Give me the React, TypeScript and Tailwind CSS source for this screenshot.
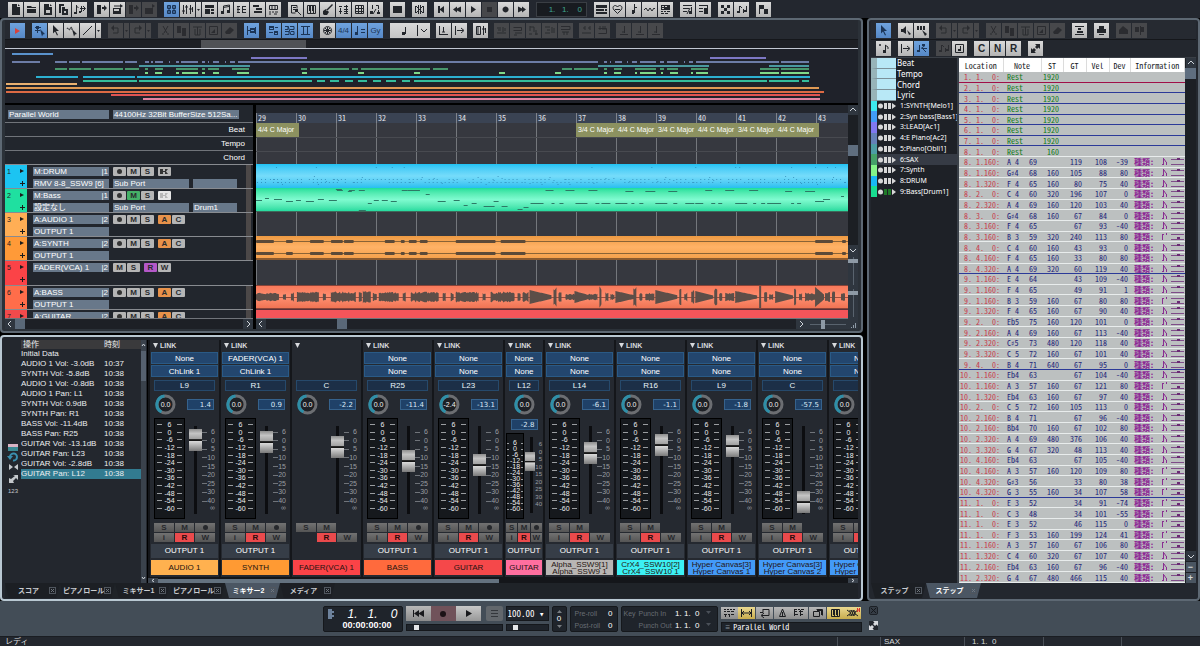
import React from 'react';
import clsx from 'clsx';

type Glyph = { f?: string; s?: string; t?: string };
type Tone = 'light' | 'blue' | 'off';
type Tool = [name: string, tone?: Tone];

// Toolbar glyphs on a 15x15 grid: f = filled, s = stroked, t = letters
const glyphs: Record<string, Glyph> = {
  'New': { f: 'M4 2h5v3h3v8H4zM10 2l2 2h-2z' },
  'Open': { f: 'M3 4h4l1 1h4v1H3zM3 7h9v4H3z' },
  'Save': { f: 'M4 2h5v3h3v8H4zM10 2l2 2h-2zM6 8v3h4V8z' },
  'Save as': { f: 'M3 2h5v2H5v7H3zM6 5h3v2h3v6H6zM8 9v2h2V9z' },
  'Export': { s: 'M4.500 3v7M4.500 4l2 2M9.500 4v6M8 6.500h5M11 4l2.500 2.500L11 9', f: 'M2 10h3v2H2zM7 9h2v2H7z' },
  'Import track': { f: 'M3 3h4v9H3zM8 5h2V3l3 3-3 3V7H8z' },
  'Import audio': { f: 'M3 6h8v6H3zM10 2l3 2-3 2zM4 7v2h5V7z', s: 'M4 4h6' },
  'Track in': { f: 'M3 3h4v9H3zM8 5h2V3l3 3-3 3V7H8z' },
  'Track out': { f: 'M3 6h8v6H3zM10 2l3 2-3 2z' },
  'Tracks': { s: 'M3.5 3.5h3v3h-3zM8.5 3.5h3v3h-3zM3.5 8.5h3v3h-3zM8.5 8.5h3v3h-3zM5 3v9M10 3v9' },
  'Mixer': { s: 'M3.5 3v9M6.5 3v9M10.5 3v9M2 9h3M5 5h3M9 7h3M12.5 5v5' },
  'Sections': { f: 'M3 3h9v3H3zM3 7h5v5H3zM9 7h3v2H9zM9 10h3v2H9z' },
  'Score': { s: 'M5.500 10V4l6-1v6M5 5.500l6-1', f: 'M3 9h3v3H3zM9 8h3v3H9z' },
  'Step': { s: 'M3 4.500h3M3 7.500h3M3 10.500h3M4 4v7M8 4.500h4M8 7.500h4M8 10.500h4M8.500 4v6' },
  'Lyrics': { f: 'M3 3h6v2H3zM6 6h6v2H6zM4 9h8v2H4z' },
  'Pads': { s: 'M3.5 3.500h8v4h-8zM6 3v5M9 3v5M3 10h2M6 10h2M9 10h3M3 12h2M8 12h3' },
  'Search': { s: 'M3.500 3v8h4M3 3.500h6v3M5 5.500h3M5 7.500h2M9 9l4 4', f: 'M7 7h3v3H7z' },
  'Piano': { s: 'M3.500 3.500h8v8h-8zM6.500 9v3M9.500 9v3', f: 'M5 3h2v6H5zM8 3h2v6H8z' },
  'Guitar': { f: 'M3 9l3-2 3 3-2 3H4l-1-1zM12 2l1 1-6 6-1-1z' },
  'Drums': { s: 'M3 4.500h3M8 4.500h4M4.500 6v6M8 7.500h4M8 9.500h4M8 11.500h4M3 9.500h3M10.500 3v9' },
  'Grid': { s: 'M3.500 3.500h8v8h-8zM3 6.500h9M3 9.500h9M6.500 3v9M9.500 3v9' },
  'Numbers': { s: 'M4.500 3v4M8 3.500h2.500V7M5 12l3-5M10.500 8v4', f: 'M2 9h3v3H2zM9 10h3v2H9z' },
  'Stop window': { f: 'M3 4h9v7H3z' },
  'Cross': { s: 'M3.500 4v7M11.500 4v7M4 4l7 7M11 4l-7 7M6.500 3v9M8.500 3v9' },
  'To start': { f: 'M4 4h2v3l4-3v7L6 8v3H4z' },
  'Rewind': { f: 'M3 7.500L7 4.500v2l4-2v6l-4-2v2z' },
  'Play': { f: 'M5 4l5 3.500L5 11z' },
  'Stop': { f: 'M5 5h5v5H5z' },
  'Record': { f: 'M7.500 4.500a3 3 0 1 0 .1 0z' },
  'Forward': { f: 'M12 7.500L8 4.500v2l-4-2v6l4-2v2z' },
  'Keys': { f: 'M2 3h11v3H2zM2 7h8v2H2zM2 10h11v2H2zM11 7h2v2h-2z' },
  'Loop': { s: 'M4 8c-3-4 2-6 3.500-3C9 2 14 4 11 8l-3.500 3.500L4 8M5 7.500h5' },
  'Tuning': { s: 'M8.500 2v8M8 5.500h3M6 11.500h2' , f: 'M6 8h3v3H6z' },
  'Wave': { s: 'M2 8l2-2 2 3 2-3 2 3 2-3 1 1' },
  'Chord pad': { f: 'M3 3h9v5H3zM4 4v1h2V4zM7 4v1h2V4zM4 6v1h2V6z', s: 'M3 9.500h2M6 9.500h2M9 9.500h3M3 11.500h3M7 11.500h3' },
  'Levels': { s: 'M3 3.500h9M3 6.500h6M3 9.500h4M10 6l-3 6M11.500 5v6', f: 'M9 9h3v3H9z' },
  'Bounce': { s: 'M3 3.500h9M3 6.500h4M3 9.500h4M11.500 4v8', f: 'M8 6h3v6H8z' },
  'Nodes': { f: 'M3 3h3v3H3zM9 3h3v3H9zM3 9h3v3H3zM9 9h3v3H9zM6 6h3v3H6z' },
  'Triplet': { s: 'M5.500 4v6M6 4l2 2M9.500 7v4M12.500 4v5', f: 'M3 9h3v2H3zM10 8h3v2h-3z' },
  'Flag': { f: 'M3 3h5v4H3zM8 7h4v5H8z', s: 'M3.500 3v9' },
  'Start': { f: 'M5 5l5 3-5 3z' },
  'Arrange tool': { s: 'M3 4.500h6M3 7.500h5M5.500 4v6', f: 'M8 6l5 5-2 .5-1 2zM4 3h3v3H4z' },
  'Pointer': { f: 'M5 2l6 6H8l2 4-1 .500-2-4-2 2z' },
  'Split tool': { s: 'M3 6c1-3 2 3 3 0s2-2 2 1', f: 'M8 6l5 5-2 .5-1 2z' },
  'Line': { s: 'M3 12l9-9' },
  'Undo': { s: 'M5 5h5v5H5', f: 'M3 5l3-3v6z' },
  'Redo': { s: 'M10 5H5v5h5', f: 'M12 5L9 2v6z' },
  'Cut': { s: 'M5 3l4 7M10 3L6 10M4 11h2M9 11h2' },
  'Copy': { f: 'M3 3h4v7H3zM8 5h4v8H8z' },
  'Paste': { s: 'M3 4h9M7.500 4v8M5 6v6h5V6' },
  'Image': { s: 'M3.500 3.500h8v8h-8z', f: 'M5 10l4-4v4z' },
  'Erase': { f: 'M3 9l5-5 4 3-4 4H4z' },
  'Snap': { s: 'M3.500 3v9M4 7.500h2M11.500 4v7', f: 'M6 5h5v5H6zM7 7v1h3V7z' },
  'Blocks': { f: 'M3 3h5v4H3zM8 8h4v4H8zM4 5v1h3V5zM9 10v1h2v-1z', s: 'M9 4.500h3M3 9.500h4' },
  'Blocks alt': { s: 'M3 3.500h3v3H3M8 3.500h4v3H8M3 8.500h4v3H3M9 8.500h3v3H9M6 3l3 9' },
  'Frame': { s: 'M3 3.500h9M3 11.500h9M5.500 3v9M9.500 3v9' },
  'Globe': { s: 'M7.500 3.500a4 4 0 1 0 .1 0M4 7.500h7M7.500 4v7M5 5l5 5M10 5l-5 5' },
  'Meter': { t: '4/4' },
  'Tempo': { s: 'M5.500 3v7M9 6.500h4M9 9.500h4', f: 'M3 9h3v3H3z' },
  'Key': { t: 'Gy' },
  'Bar one': { s: 'M3.500 3v9M3 11.500h9M7.500 4v5M6 9h3' },
  'Step right': { s: 'M3.500 3v9M5 7.500h6M9 5l3 2.500L9 10' },
  'Panel': { s: 'M3.500 3.500h4v8h-4zM10.500 3v9M9 6h3M12.500 5v5M5 4v7' },
  'Edit A': { s: 'M3 5h4M4 7h3M3 10h9M9 4v5M11 5v3' },
  'Edit B': { s: 'M3.500 4.500h8v3h-8M5 10h7M4 12h3' },
  'Edit C': { s: 'M4 3v5M4 4h4M8 4v5M3 11h3M9 11h3M10 7v5' },
  'Edit D': { s: 'M3 4h5M5 7h3M10 4v6M3 10h5M12 5v5' },
  'Edit E': { s: 'M3 3.500h9v3H3M4 9h7M6 9v3M9 9v3' },
  'Pair': { s: 'M4 5h2M9 5h2M3 10h9M6 3v4M11 3v4' },
  'Rack': { s: 'M3.500 5.500h8v5h-8M5 3v4M8 3v4M10 3v4' },
  'Down': { s: 'M8.500 3v7M4 11.500h8M6 9h3' },
  'Select notes': { f: 'M3 6h2l3-3v8L5 9H3zM9 7l4 4-2 1z' },
  'Select keys': { f: 'M3 3h2v4H3zM6 3h2v4H6zM9 3h2v4H9zM8 7l5 4-2 2z' },
  'Lanes': { s: 'M3 3.500h9M3 11.500h9', f: 'M6 5h3v2H6zM5 8h6v2H5z' },
  'Print': { f: 'M5 3h5v3H5zM3 6h9v4H3zM5 11h5v1H5z' },
  'Home': { f: 'M7 3l5 4v4H3V7z' },
  'Mirror': { f: 'M3 4h4v5H3zM9 4h3v5H9zM8 3h1v9H8z' },
  'Note': { s: 'M3 4h2M4 3v2M9.500 4v7M9 4l3 2v2', f: 'M7 9h3v3H7z' },
  'Link notes': { s: 'M5.500 4v6M7 7.500l4-3M8 7l4 4M9 7.500h4', f: 'M3 9h3v2H3zM8 3h3v2H8z' },
  'Boxed note': { s: 'M3.500 3.500h8v8h-8zM8.500 5v5', f: 'M6 8h3v2H6z' },
  'C': { t: 'C' },
  'N': { t: 'N' },
  'R': { t: 'R' },
  'Expand': { f: 'M7 3h5v5l-1.500-1.500-1.500 1.500-2-2L8.500 4.500zM3 7l1.500 1.500L6 7l2 2-1.500 1.500L8 12H3z' },
};

const mono = "font-['Noto_Sans_Mono_CJK_JP','Liberation_Sans_Narrow','Liberation_Mono','Noto_Sans_CJK_JP',monospace]";

const toneClass: Record<Tone, string> = {
  light: 'bg-linear-to-b from-[#dadada] to-[#b4b4b4] text-[#22252a]',
  blue: 'bg-linear-to-b from-[#6fa3de] to-[#5688c6] text-[#1b3557]',
  off: 'bg-[#47484b] text-[#2b2c30]',
};

const ToolButton: React.FC<{ tool: Tool }> = ({ tool: [name, tone = 'light'] }) => {
  if (name === 'v') {
    return (
      <button aria-label="More" className={clsx('flex h-[15px] w-[5px] items-center justify-center', toneClass[tone])}>
        <svg viewBox="0 0 5 5" className="w-[5px]"><path d="M1 2h3L2.500 4z" fill="currentColor" /></svg>
      </button>
    );
  }
  const g = glyphs[name];
  return (
    <button aria-label={name} className={clsx('h-[15px] w-[15px] shrink-0', toneClass[tone], name === 'Start' && 'text-[#d8423c]')}>
      {g.t ? (
        <span className={clsx('block text-center leading-[15px]', g.t.length > 1 ? 'text-[8px]' : 'text-[10px] font-bold')}>{g.t}</span>
      ) : (
        <svg viewBox="0 0 15 15" className="h-[15px] w-[15px]">
          {g.s && <path d={g.s} fill="none" stroke="currentColor" />}
          {g.f && <path d={g.f} fill="currentColor" fillRule="evenodd" />}
        </svg>
      )}
    </button>
  );
};

const Group: React.FC<{ tools: Tool[] }> = ({ tools }) => (
  <div className="flex gap-px">
    {tools.map((t, i) => <ToolButton key={i} tool={t} />)}
  </div>
);

const off = (...names: string[]): Tool[] => names.map((n) => [n, 'off']);
const on = (...names: string[]): Tool[] => names.map((n) => [n]);
const blue = (...names: string[]): Tool[] => names.map((n) => [n, 'blue']);

const TopBar = () => (
  <header className="flex h-[18px] shrink-0 items-center gap-[7px] overflow-hidden bg-[#23272f] pt-px pl-2">
    <Group tools={on('New', 'Open', 'Save', 'Save as', 'Export')} />
    <Group tools={[...on('Import track', 'Import audio'), ...off('Track in', 'Track out')]} />
    <Group tools={[['Tracks', 'blue'], ...on('Mixer', 'v', 'Sections', 'Score', 'Step', 'Lyrics', 'Pads')]} />
    <Group tools={on('Search', 'Piano', 'Guitar', 'Drums', 'Grid', 'Numbers')} />
    <Group tools={on('Stop window')} />
    <Group tools={on('Cross')} />
    <Group tools={[...on('To start', 'Rewind', 'Play'), ['Stop', 'off'], ...on('Record', 'Forward')]} />
    <div className="flex h-[15px] w-[51px] items-center justify-end border border-[#3a3e44] bg-[#181b20] pr-1 text-[8px] text-[#3fa592]">
      <span className="whitespace-pre">1.   1.    0</span>
    </div>
    <Group tools={on('Keys', 'Loop', 'Tuning', 'Wave', 'Chord pad')} />
    <Group tools={on('Levels', 'Bounce')} />
    <Group tools={on('Nodes', 'Triplet')} />
    <Group tools={on('Flag')} />
  </header>
);

const EditBar = () => (
  <div className="flex h-5 shrink-0 items-center gap-[7px] overflow-hidden border-b border-[#15171b] bg-[#262a31] pt-px pl-[5px]">
    <Group tools={blue('Start')} />
    <Group tools={[['Arrange tool', 'blue'], ...on('Pointer', 'Split tool', 'Line', 'v')]} />
    <Group tools={off('Undo', 'v', 'Redo', 'v')} />
    <Group tools={off('Cut', 'Copy', 'Paste', 'Image', 'Erase')} />
    <Group tools={blue('Snap')} />
    <Group tools={blue('Blocks', 'Blocks alt', 'Frame')} />
    <Group tools={[['Globe'], ...blue('Meter', 'Tempo', 'Key')]} />
    <div className="flex gap-1.5">
      <button aria-label="Note length" className="flex h-[15px] w-10 bg-linear-to-b from-[#dadada] to-[#c4c4c4] text-[#22252a]">
        <svg viewBox="0 0 40 15" className="h-[15px] w-10">
          <path d="M15.500 4v7M27.500 2v11M31 6l3 3 3-3" fill="none" stroke="currentColor" />
          <path d="M12 9h3v3h-3z" fill="currentColor" />
        </svg>
      </button>
      <Group tools={on('Bar one', 'Step right')} />
      <Group tools={on('Panel')} />
      <Group tools={off('Edit A', 'Edit B', 'Edit C', 'Edit D', 'Edit E')} />
      <Group tools={off('Pair', 'Rack')} />
      <Group tools={off('Down', 'Down', 'Down')} />
    </div>
  </div>
);

type Segs = [number, number][];
const overview: { y: number; color: string; segs: Segs }[] = [
  { y: 4, color: '#5a92cc', segs: [[12, 53]] },
  { y: 8, color: '#7d78c4', segs: [[251, 307], [710, 766]] },
  { y: 12, color: '#6c7ca6', segs: [[12, 40], [55, 67], [69, 80], [82, 123], [125, 137], [145, 149], [151, 153], [155, 163], [169, 170], [176, 179], [181, 198], [202, 205], [208, 209], [213, 219], [225, 226], [230, 235], [238, 598], [604, 607], [610, 611], [615, 622], [627, 628], [632, 637], [640, 656], [660, 664], [667, 678], [684, 685], [689, 693], [696, 779], [781, 809]] },
  { y: 16, color: '#4a98a0', segs: [[139, 250], [598, 709], [769, 809]] },
  { y: 19, color: '#48966c', segs: [[55, 67], [69, 91], [94, 123], [125, 139], [145, 148], [155, 163], [176, 198], [202, 205], [208, 219], [232, 249], [301, 307], [310, 349], [352, 358], [361, 430], [433, 448], [562, 572], [574, 598], [604, 607], [614, 622], [635, 656], [660, 664], [667, 678], [691, 708], [760, 779], [781, 809]] },
  { y: 23, color: '#80d888', segs: [[145, 148], [155, 162], [176, 179], [182, 198], [202, 205], [213, 219], [237, 249], [302, 307], [358, 364], [414, 420], [499, 505], [555, 561], [604, 607], [614, 621], [635, 637], [640, 656], [661, 663], [670, 678], [691, 693], [696, 708], [760, 779], [781, 809]] },
  { y: 27, color: '#2cb0d0', segs: [[36, 78], [83, 135], [137, 810]] },
  { y: 31, color: '#34bc9c', segs: [[83, 137], [139, 312], [317, 325], [330, 339], [345, 353], [358, 367], [373, 381], [386, 396], [402, 410], [414, 767], [769, 799], [802, 809]] },
  { y: 34, color: '#e8b070', segs: [[6, 77]] },
  { y: 38, color: '#e09a54', segs: [[6, 819]] },
  { y: 42, color: '#dc6a44', segs: [[6, 824]] },
  { y: 45, color: '#e05452', segs: [[111, 820]] },
  { y: 49, color: '#e484a0', segs: [[143, 820]] },
];

const Overview = () => (
  <div className="shrink-0 border-b-2 border-black bg-[#1f222a]">
    <div className="h-[9px] border-b border-[#c3c8d2] bg-[#1e2025] pl-[23%]">
      <div className="h-2 w-[16%] bg-[#505256]" />
    </div>
    <svg viewBox="5 0 853 54" preserveAspectRatio="none" className="block h-[54px] w-full">
      {overview.flatMap(({ y, color, segs }) =>
        segs.map(([a, b]) => <rect key={`${y}-${a}`} x={a} y={y} width={b - a} height={2} fill={color} />),
      )}
    </svg>
  </div>
);

const Field: React.FC<{ className?: string; children?: React.ReactNode }> = ({ className, children }) => (
  <div className={clsx('flex h-[9px] justify-between overflow-hidden bg-[#68788a] px-px text-[8px] leading-[9px] whitespace-nowrap text-white', className)}>
    {children}
  </div>
);

type Track = { name: string; ch: number; out?: string; keys: string[]; port?: string[]; num: string; hot?: string };
const tracks: Track[] = [
  { name: 'M:DRUM', ch: 1, out: 'RMV 8-8_SSW9 [6]', keys: ['●', 'M', 'S', '', 'K'], port: ['Sub Port', ''], num: 'bg-[#1cc4f2]' },
  { name: 'M:Bass', ch: 1, out: '設定なし', keys: ['●', 'M', 'S', '', 'K'], port: ['Sub Port', 'Drum1'], num: 'bg-[#1fe0a0]', hot: 'M' },
  { name: 'A:AUDIO 1', ch: 2, out: 'OUTPUT 1', keys: ['●', 'M', 'S', '', 'A', 'C'], num: 'bg-[#ffae55]', hot: 'A' },
  { name: 'A:SYNTH', ch: 2, out: 'OUTPUT 1', keys: ['●', 'M', 'S', '', 'A', 'C'], num: 'bg-[#ff9a38]', hot: 'A' },
  { name: 'FADER(VCA) 1', ch: 2, keys: ['M', 'S', '', 'R', 'W'], num: 'bg-[#fb4347]', hot: 'R' },
  { name: 'A:BASS', ch: 2, out: 'OUTPUT 1', keys: ['●', 'M', 'S', '', 'A', 'C'], num: 'bg-[#ff6d4a]', hot: 'A' },
  { name: 'A:GUITAR', ch: 2, keys: ['●', 'M', 'S', '', 'A', 'C'], num: 'bg-[#f24a4c]', hot: 'A' },
];

const hotClass: Record<string, string> = {
  M: 'bg-[#45b067]',
  A: 'bg-[#e8924a]',
  R: 'bg-[#b458c8]',
};

const TrackKeys: React.FC<{ track: Track }> = ({ track }) => (
  <div className="flex gap-px">
    {track.keys.map((k, i) =>
      k === '' ? <span key={i} className="w-0.5" /> : (
        <button
          key={i}
          className={clsx(
            'flex h-[9px] w-[13px] items-center justify-center rounded-[1px] text-[8px] leading-[9px] font-bold text-[#2a2b2e]',
            k === track.hot ? hotClass[k] : k === 'K' && track.hot ? 'bg-[#e6e6e6]' : 'bg-[#b5b5b5]',
          )}
          aria-label={k === '●' ? 'Record arm' : k === 'K' ? 'Keyboard' : k}
        >
          {k === '●' && <span className="h-[5px] w-[5px] rounded-full bg-[#333]" />}
          {k === 'K' && (
            <svg viewBox="0 0 9 5" className="w-[9px]"><path d="M0 0h3v2h2V0h3l-2 2.500L8 5H5V3H3v2H0z" fill={track.hot ? '#b8b8b8' : '#333'} /></svg>
          )}
          {k !== '●' && k !== 'K' && k}
        </button>
      ),
    )}
  </div>
);

const TrackList = () => (
  <div className="flex w-[248px] shrink-0 flex-col bg-[#22262d] text-white">
    <div className="flex h-[17px] shrink-0 items-center gap-1 pt-px pl-[3px]">
      <Field className="w-[101px]">Parallel World</Field>
      <Field className="w-[126px]">44100Hz 32Bit BufferSize 512Sa...</Field>
    </div>
    {['Beat', 'Tempo', 'Chord'].map((n) => (
      <div key={n} className="h-[14px] shrink-0 border-t border-[#70747a] pr-2 text-right text-[8px] leading-[14px]">{n}</div>
    ))}
    <div className="min-h-0 flex-1 overflow-hidden">
      {tracks.map((t, i) => (
        <div key={t.name} className={clsx('flex border-t border-[#888b90]', i === 4 ? 'h-[25px]' : 'h-6')}>
          <div className={clsx('flex w-[22px] justify-between px-0.5 py-px text-[7px] text-[#222]', t.num)}>
            <span className="leading-[11px]">{i + 1}</span>
            <svg viewBox="0 0 5 21" className="h-[21px] w-[5px]">
              <path d="M0 3l4 2-4 2zM2 15h1v2h2v1H3v2H2v-2H0v-1h2z" fill="#1c1c1c" />
            </svg>
          </div>
          <div className="ml-1.5 flex flex-1 flex-col gap-[3px] pt-0.5">
            <div className="flex gap-1">
              <Field className="w-[76px]"><span>{t.name}</span><span>|{t.ch}</span></Field>
              <TrackKeys track={t} />
            </div>
            <div className="flex gap-1">
              {t.out && <Field className="w-[76px]">{t.out}</Field>}
              {t.port && <Field className="w-[76px]">{t.port[0]}</Field>}
              {t.port && <Field className="w-11">{t.port[1]}</Field>}
            </div>
          </div>
          <div className={clsx('mr-0.5 w-[5px]', i !== 4 && 'bg-[#4c4848]')} />
        </div>
      ))}
    </div>
    <div className="flex h-[11px] shrink-0 items-center justify-between border-t border-[#70747a] bg-[#1d2026]">
      <div className="flex items-center">
        <Chevron dir="left" />
        <span className="h-[10px] w-[10px] bg-[#5a6878]" />
      </div>
      <Chevron dir="right" />
    </div>
  </div>
);

const chevrons = { left: 'M6 2L3 5l3 3', right: 'M4 2l3 3-3 3', up: 'M2 6l3-3 3 3', down: 'M2 4l3 3 3-3' };
const Chevron: React.FC<{ dir: keyof typeof chevrons }> = ({ dir }) => (
  <button aria-label={`Scroll ${dir}`} className="h-[10px] w-[10px] shrink-0 bg-[#2f363f]">
    <svg viewBox="0 0 10 10" className="h-[10px] w-[10px]"><path d={chevrons[dir]} fill="none" stroke="#cfd4da" /></svg>
  </button>
);

const beats: { bar: number; sig?: string }[] = Array.from({ length: 15 }, (_, i) => {
  const bar = 29 + i;
  if (bar === 29) return { bar, sig: '4/4 C Major' };
  if (bar >= 37 && bar < 43) return { bar, sig: bar % 2 ? '3/4 C Major' : '4/4 C Major' };
  return { bar };
});

const gridLines = 'bg-[repeating-linear-gradient(90deg,#74777c_0px,#74777c_1px,#36383f_1px,#36383f_40px)]';

const rnd = (n: number) => {
  const v = Math.sin(n * 127.1) * 43758.5453;
  return v - Math.floor(v);
};

const drumHits = Array.from({ length: 148 }, (_, i) => i).flatMap((i) => {
  const dots = [{ x: i * 4 + 1, y: 15 }, { x: i * 4 + 1, y: 18 }];
  if (rnd(i) > 0.5) dots.push({ x: i * 4 + 2, y: 12 + Math.floor(rnd(i + 9) * 9) });
  if (rnd(i + 50) > 0.85) dots.push({ x: i * 4, y: 3 });
  return dots.filter((_, k) => rnd(i * 3 + k) > 0.3);
});

const bassNotes: [number, number, number][] = [
  [0, 12, 6], [9, 10, 4], [18, 11, 8], [30, 13, 7], [40, 12, 5], [50, 13, 8], [62, 11, 6], [73, 12, 8], [80, 1, 6], [92, 3, 4], [103, 22, 7], [112, 15, 4],
  [118, 12, 5], [126, 12, 6], [135, 13, 6], [152, 2, 12], [170, 6, 4], [182, 13, 8], [198, 12, 6], [208, 17, 4], [216, 15, 5], [228, 18, 11], [238, 13, 5], [246, 18, 6],
  [262, 21, 5], [268, 19, 5], [275, 15, 13], [296, 15, 3], [304, 15, 4], [290, 2, 8], [310, 2, 9], [320, 15, 12], [340, 15, 4], [346, 15, 9], [333, 2, 9],
  [360, 15, 12], [376, 15, 3], [384, 15, 4], [370, 3, 8], [390, 3, 10], [400, 15, 12], [413, 3, 9], [418, 15, 4], [430, 15, 9], [440, 15, 8], [450, 2, 7], [456, 15, 4], [463, 15, 4], [470, 2, 9],
  [480, 15, 12], [494, 2, 9], [498, 15, 3], [506, 15, 4], [512, 15, 14], [530, 3, 7], [536, 15, 3], [542, 15, 4], [550, 3, 10], [560, 13, 9], [568, 11, 7], [586, 8, 3],
];

// Each burst of the bass take: start, width, half height, decays or not
const bursts: [number, number, number, boolean?][] = [
  [0, 23, 4], [27, 3, 3], [35, 3, 5], [41, 22, 5], [67, 3, 4], [75, 25, 5], [103, 3, 5], [107, 8, 6], [117, 4, 4], [123, 20, 5], [147, 3, 4], [155, 28, 5], [187, 3, 4], [195, 3, 4], [200, 23, 5], [227, 3, 4], [235, 24, 5], [262, 3, 4],
  [267, 6, 5], [274, 22, 7, true], [298, 3, 9], [303, 3, 5], [310, 9, 3], [319, 16, 6, true], [333, 9, 3], [344, 2, 10], [350, 3, 5], [355, 4, 3], [360, 20, 6, true], [378, 3, 9], [384, 3, 4], [390, 9, 4], [400, 22, 7, true], [424, 2, 8], [429, 3, 4], [436, 3, 7], [440, 18, 6, true], [459, 3, 9], [464, 3, 4], [470, 9, 4], [480, 22, 6, true], [504, 2, 11], [509, 3, 5], [514, 4, 3], [520, 18, 6, true], [539, 2, 10], [544, 3, 4], [550, 10, 4], [560, 9, 10, true], [570, 5, 5], [577, 3, 6], [586, 4, 4],
];
const wavePath = bursts.map(([x, w, h, decay]) => {
  const top = Array.from({ length: w + 1 }, (_, i) => {
    const fall = decay ? 1 - (i / w) * 0.75 : 1;
    return [x + i, Math.max(1, h * fall * (decay ? 1 : 0.65 + rnd(x + i) * 0.45))];
  });
  return `M${top.map(([a, b]) => `${a} ${11 - b}`).join('L')}L${top.reverse().map(([a, b]) => `${a} ${11 + b}`).join('L')}Z`;
}).join('');

const synthBursts: [number, number][] = [[0, 18], [30, 7], [54, 14], [75, 12], [88, 10], [129, 10], [145, 4], [153, 8], [164, 8], [200, 40], [245, 25], [560, 18], [587, 4]];

const Arrange = () => (
  <div className="flex min-w-0 flex-1 flex-col overflow-hidden bg-[#23262d]">
    <div className="h-2 shrink-0" />
    <div className="flex h-[10px] shrink-0 bg-[#3a4353]">
      {beats.map(({ bar }) => (
        <span key={bar} className={clsx('w-10 shrink-0 border-l border-[#80848c] pl-px text-[8px] leading-[10px] text-[#e4e6ea]', mono)}>{bar}</span>
      ))}
    </div>
    <div className={clsx('flex h-[14px] shrink-0 overflow-hidden', gridLines)}>
      {beats.map(({ bar, sig }) => (
        <span
          key={bar}
          className={clsx('shrink-0 pl-0.5 text-[7px] leading-[14px] whitespace-nowrap text-white', sig && 'bg-[#8c9160]', bar === 29 || bar === 42 ? '-mr-[3px] w-[43px]' : 'w-10')}
        >
          {sig}
        </span>
      ))}
    </div>
    <div className={clsx('h-[14px] shrink-0 border-t border-[#484a50]', gridLines)} />
    <div className={clsx('h-[13px] shrink-0 border-t border-[#484a50]', gridLines)} />
    <div className="min-h-0 flex-1 overflow-hidden">
      <div className="h-6 bg-linear-to-b from-[#1dc3f4] via-[#76dcfa] to-[#24bff0]">
        <svg viewBox="0 0 593 24" preserveAspectRatio="none" className="h-6 w-full">
          {drumHits.map((d, i) => <rect key={i} x={d.x} y={d.y} width={1} height={1} fill="#2a7fae" opacity={0.7} />)}
        </svg>
      </div>
      <div className="h-6 border-b border-[#3e6a5a] bg-linear-to-b from-[#1adf9b] via-[#7ffbd0] to-[#22dca0]">
        <svg viewBox="0 0 593 24" preserveAspectRatio="none" className="h-6 w-full">
          {bassNotes.map(([x, y, w], i) => <rect key={i} x={x} y={y} width={w} height={1} fill="#2d7a66" />)}
          {[81, 93, 103, 146, 158].map((x) => <rect key={x} x={x} y={2} width={6} height={1} fill="#2d7a66" />)}
        </svg>
      </div>
      <div className={clsx('h-6', gridLines)} />
      <div className="h-6 border-b-2 border-[#8a5a30] bg-linear-to-b from-[#ee9a42] via-[#ffb266] to-[#f6a14c]">
        <svg viewBox="0 0 593 22" preserveAspectRatio="none" className="h-[22px] w-full">
          <path d="M0 5.500h593M0 17.500h593" stroke="#8a6236" />
          {synthBursts.map(([x, w]) => [4, 16].map((y) => <rect key={`${x}-${y}`} x={x} y={y} width={w} height={3} rx={1} fill="#5c4a38" />))}
        </svg>
      </div>
      <div className={clsx('h-[25px]', gridLines)} />
      <div className="h-6 border-y border-[#8a4438] bg-linear-to-b from-[#f8795a] via-[#ff8f70] to-[#f07454]">
        <svg viewBox="0 0 593 22" preserveAspectRatio="none" className="h-[22px] w-full">
          <path d="M0 11.500h593" stroke="#a04c3c" />
          <path d={wavePath} fill="#5c4e48" />
        </svg>
      </div>
      <div className="h-6 border-t border-[#5c3038] bg-[#f4555a]" />
    </div>
    <div className="flex h-[11px] shrink-0 items-center border-t border-[#70747a] bg-[#1f2228]">
      <Chevron dir="left" />
      <div className="flex-1 pl-[12%]"><span className="block h-[10px] w-[10px] bg-[#5a6878]" /></div>
      <Chevron dir="right" />
      <svg viewBox="0 0 42 10" className="h-[10px] w-[42px] bg-[#2f363f]">
        <path d="M4 5.500h36" stroke="#59636e" />
        <path d="M15 1h4v9h-4z" fill="#8e9aa6" />
      </svg>
    </div>
  </div>
);

const ArrangeScroll = () => (
  <div className="flex w-[10px] shrink-0 flex-col bg-[#1c1f24]">
    <Chevron dir="up" />
    <div className="flex-1 pt-[30px]"><span className="block h-[11px] bg-[#5f6e7f]" /></div>
    <Chevron dir="down" />
    <svg viewBox="0 0 10 74" className="h-[74px] w-[10px] bg-[#2f363f]">
      <path d="M5.500 2v28M5.500 34v28" stroke="#59636e" />
      <path d="M0 4h10v4H0zM0 36h10v4H0z" fill="#8e9aa6" />
      <path d="M3 72h1v1H3zM5 70h1v3H5zM7 68h1v5H7z" fill="#8e9aa6" />
    </svg>
  </div>
);

const history: [string, string][] = [
  ['Initial Data', ''],
  ['AUDIO 1 Vol: -3.0dB', '10:37'],
  ['SYNTH Vol: -5.8dB', '10:38'],
  ['AUDIO 1 Vol: -0.8dB', '10:38'],
  ['AUDIO 1 Pan: L1', '10:38'],
  ['SYNTH Vol: 0.9dB', '10:38'],
  ['SYNTH Pan: R1', '10:38'],
  ['BASS Vol: -11.4dB', '10:38'],
  ['BASS Pan: R25', '10:38'],
  ['GUITAR Vol: -13.1dB', '10:38'],
  ['GUITAR Pan: L23', '10:38'],
  ['GUITAR Vol: -2.8dB', '10:38'],
  ['GUITAR Pan: L12', '10:38'],
];

const History = () => (
  <div className="flex shrink-0 bg-[#23272e]">
    <svg viewBox="0 0 16 60" className="mt-24 h-[60px] w-4">
      <path d="M3 8h10v3H3z" fill="#d9b3c4" />
      <path d="M3 11h10v4H3z" fill="#3c8a94" />
      <path d="M5 20.500a3.500 3.500 0 1 1 3 4" fill="none" stroke="#3a8fae" strokeWidth="2" />
      <path d="M2 20h6l-3 4z" fill="#3a8fae" />
      <path d="M4 28l4 3-4 3zM13 28l-4 3 4 3z" fill="#c4c8cc" />
      <path d="M8 39h5v5l-2-2-3 3 1 2H4v-5l2 1 4-3z" fill="#c4c8cc" />
      <text x="3" y="57" fill="#c4c8cc" fontSize="6">123</text>
    </svg>
    <table className="w-[120px] table-fixed self-start text-left text-[8px] leading-[10px] whitespace-nowrap text-[#eceef0]">
      <thead>
        <tr className="h-[9px] bg-[#3a3a3c]">
          <th className="w-[83px] pl-0.5 leading-[9px] font-normal">操作</th>
          <th className="leading-[9px] font-normal">時刻</th>
        </tr>
      </thead>
      <tbody>
        {history.map(([op, time], i) => (
          <tr key={i} className={clsx('h-[10px]', i === 12 && 'bg-[#327b90]')}>
            <td>{op}</td>
            <td>{time}</td>
          </tr>
        ))}
      </tbody>
    </table>
    <div className="mr-px flex w-[5px] flex-col items-center bg-[#3a424c] py-[3px]">
      <svg viewBox="0 0 5 4" className="w-[5px]"><path d="M1 3l1.500-2L4 3" fill="none" stroke="#cfd4da" /></svg>
      <div className="mt-1 h-[30px] w-full bg-[#56616f]" />
      <svg viewBox="0 0 5 4" className="mt-auto w-[5px]"><path d="M1 1l1.500 2L4 1" fill="none" stroke="#cfd4da" /></svg>
    </div>
  </div>
);

type Strip = { link?: string[]; pan: string; knob?: string; vol: string; pos: number; label: string[]; color: string; narrow?: boolean; rec?: boolean; vca?: boolean };
const strips: Strip[] = [
  { link: ['None', 'ChLink 1'], pan: 'L9', vol: '1.4', pos: 95, label: ['AUDIO 1'], color: 'bg-[#ffb14f]', rec: true },
  { link: ['FADER(VCA) 1', 'ChLink 1'], pan: 'R1', vol: '0.9', pos: 92, label: ['SYNTH'], color: 'bg-[#ff9a33]', rec: true },
  { pan: 'C', vol: '-2.2', pos: 85, label: ['FADER(VCA) 1'], color: 'bg-[#fb4347]', vca: true },
  { link: ['None', 'None'], pan: 'R25', vol: '-11.4', pos: 63, label: ['BASS'], color: 'bg-[#ff6a3d]', rec: true },
  { link: ['None', 'None'], pan: 'L23', knob: '-2.4', vol: '-13.1', pos: 58, label: ['GUITAR'], color: 'bg-[#f5484a]', rec: true },
  { link: ['None', 'None'], pan: 'L12', vol: '-2.8', pos: 74, label: ['GUITAR'], color: 'bg-[#ff6f9f]', narrow: true, rec: true },
  { link: ['None', 'None'], pan: 'L14', vol: '-6.1', pos: 76, label: ['Alpha_SSW9[1]', 'Alpha_SSW9 1'], color: 'bg-[#b9b6b4]' },
  { link: ['None', 'None'], pan: 'R16', vol: '-1.1', pos: 88, label: ['CrX4_SSW10[2]', 'CrX4_SSW10 1'], color: 'bg-[#3cf0f4]' },
  { link: ['None', 'None'], pan: 'L9', vol: '-1.8', pos: 87, label: ['Hyper Canvas[3]', 'Hyper Canvas 1'], color: 'bg-[#439af8]' },
  { link: ['None', 'None'], pan: 'C', vol: '-57.5', pos: 1, label: ['Hyper Canvas[3]', 'Hyper Canvas 2'], color: 'bg-[#439af8]' },
  { link: ['None', 'None'], pan: 'C', vol: '-57.5', pos: 1, label: ['Hyper Canvas[3]', 'Hyper Canvas 3'], color: 'bg-[#439af8]' },
];

const meterMarks = ['6', '0', '-6', '-12', '-18', '-24', '-30', '-36', '-42', '-48', '-54', '-60'];
const faderMarks = ['6', '0', '5', '10', '15', '20', '25', '30', '40'];

const Knob: React.FC<{ value: string }> = ({ value }) => (
  <svg viewBox="0 0 21 21" className="h-[21px] w-[21px]">
    <circle cx="10.500" cy="10.500" r="8.500" fill="#1d2025" stroke="#6c6e72" strokeWidth="3" />
    <path d="M6.500 18A8.500 8.500 0 0 1 9.500 2" fill="none" stroke="#2e8fa8" strokeWidth="3" />
    <text x="10.500" y="13" textAnchor="middle" fontSize="7" fill="#f2f2f2">{value}</text>
  </svg>
);

const VolBox: React.FC<{ value: string }> = ({ value }) => (
  <span className="block h-[11px] w-[27px] border border-[#36628c] bg-[#1f4168] pr-0.5 text-right font-['DejaVu_Sans',sans-serif] text-[7px] leading-[10px] text-[#dceaf6]">{value}</span>
);

const StripButton: React.FC<{ name: string }> = ({ name }) => (
  <button
    aria-label={name === '●' ? 'Record' : name}
    className={clsx(
      'flex h-[9px] flex-1 items-center justify-center text-[8px] leading-[9px] font-bold',
      name === 'R' ? 'bg-[#ea4a4c] text-[#280c0c]' : 'bg-linear-to-b from-[#727272] to-[#555] text-[#26282c]',
    )}
  >
    {name === '●' ? <span className="h-[5px] w-[5px] rounded-full bg-[#26282c]" /> : name}
  </button>
);

const ChannelStrip: React.FC<{ strip: Strip }> = ({ strip: s }) => (
  <div className={clsx('flex shrink-0 flex-col border-l-2 border-[#14161a] px-px pb-0.5', s.narrow ? 'w-10' : 'w-1/10')}>
    <div className="flex h-[11px] items-center gap-0.5 pl-0.5 text-[7px] font-bold text-[#d8dadd]">
      <svg viewBox="0 0 5 5" className="w-[5px]"><path d="M0 0h5L2.500 5z" fill="#d8dadd" /></svg>
      {s.link && 'LINK'}
    </div>
    <div className="mt-px flex h-[25px] flex-col gap-px">
      {s.link?.map((l, i) => (
        <span key={i} className="h-3 overflow-hidden border border-[#2a5a86] bg-[#23466e] text-center text-[8px] leading-[11px] whitespace-nowrap text-white">{l}</span>
      ))}
    </div>
    <span className="mx-[3px] mt-[3px] h-[11px] border border-[#26496b] bg-[#1c2f47] text-center text-[8px] leading-[10px] text-[#e8f4fa]">{s.pan}</span>
    <div className={clsx('mt-[3px] flex h-[21px] items-center px-1', s.narrow ? 'justify-center' : 'justify-between')}>
      <Knob value={s.knob ?? '0.0'} />
      {!s.narrow && <VolBox value={s.vol} />}
    </div>
    {s.narrow && <div className="mt-1 flex justify-center"><VolBox value={s.vol} /></div>}
    <div className={clsx('mt-[3px] flex', s.narrow ? 'h-[86px]' : 'h-[101px] px-[3px]')}>
      <div
        className={clsx(
          'flex shrink-0 flex-col items-center justify-between text-[7px]',
          !s.vca && 'border border-black bg-[#16191d]',
          s.narrow ? 'w-[18px] py-1.5 leading-[6px]' : 'w-[31px] pt-0.5 pb-1.5 leading-[7px]',
        )}
      >
        {!s.vca && meterMarks.map((m) => (
          <div key={m} className="flex w-full items-center justify-between text-[#eceef0]">
            <span className={clsx('h-px bg-[#9a9da0]', s.narrow ? 'w-0.5' : 'ml-0.5 w-[5px]')} />
            {m}
            <span className={clsx('h-px bg-[#9a9da0]', s.narrow ? 'w-0.5' : 'mr-0.5 w-[5px]')} />
          </div>
        ))}
      </div>
      <input
        type="range"
        aria-label={`${s.label[0]} volume`}
        defaultValue={s.pos}
        className={clsx(
          'm-0 shrink-0 appearance-none bg-transparent [direction:rtl] [writing-mode:vertical-lr]',
          'bg-[linear-gradient(90deg,transparent_5px,#0c0d10_5px,#0c0d10_8px,transparent_8px)]',
          '[&::-webkit-slider-thumb]:appearance-none [&::-webkit-slider-thumb]:bg-[linear-gradient(180deg,#8e8e8e_0%,#c4c4c4_20%,#a0a0a0_46%,#151515_48%,#151515_54%,#d8d8d8_56%,#7a7a7a_100%)]',
          s.narrow
            ? 'mt-1 ml-px h-[76px] w-[10px] [&::-webkit-slider-thumb]:h-[19px] [&::-webkit-slider-thumb]:w-[10px]'
            : 'mt-2 ml-1 h-[88px] w-[13px] [&::-webkit-slider-thumb]:h-[22px] [&::-webkit-slider-thumb]:w-[13px]',
        )}
      />
      <div className={clsx('flex flex-1 flex-col text-right text-[#9a9da2]', s.narrow ? 'mt-2 text-[6px] leading-[6px]' : 'mt-[10px] text-[7px] leading-[8px]')}>
        <div className={clsx('flex flex-col justify-between', s.narrow ? 'h-[66px]' : 'h-[77px]')}>
          {faderMarks.map((m) => (
            <div key={m} className="flex items-center justify-between">
              <span className={clsx('h-px bg-[#70747a]', s.narrow ? 'w-0' : 'w-[5px]')} />
              {m}
            </div>
          ))}
        </div>
        {!s.narrow && <span className="leading-[5px]">∞</span>}
      </div>
    </div>
    <div className={clsx('mt-1 flex flex-col gap-px', !s.narrow && 'mx-[3px]')}>
      <div className="flex gap-px">
        <StripButton name="S" />
        <StripButton name="M" />
        {s.rec ? <StripButton name="●" /> : <span className="flex-1" />}
      </div>
      <div className="flex gap-px">
        {s.vca ? <span className="flex-1" /> : <StripButton name="i" />}
        <StripButton name="R" />
        <StripButton name="W" />
      </div>
    </div>
    <span className={clsx('mt-0.5 h-[14px] overflow-hidden text-center text-[8px] leading-[14px] whitespace-nowrap text-white', !s.vca && 'bg-[#363d47]')}>
      {s.vca ? '' : s.narrow ? 'OUTPUT' : 'OUTPUT 1'}
    </span>
    <div className={clsx('mt-0.5 flex h-[15px] flex-col justify-center overflow-hidden text-center text-[8px] leading-[7px] whitespace-nowrap text-[#241410]', s.color)}>
      {s.label.map((l) => <span key={l}>{l}</span>)}
    </div>
  </div>
);

const Tab: React.FC<{ label: string; active?: boolean }> = ({ label, active }) => (
  <div
    className={clsx(
      'flex h-[15px] w-[55px] items-center pr-1 pl-[3px] text-[7px] font-bold whitespace-nowrap [clip-path:polygon(0_0,100%_0,calc(100%-4px)_100%,4px_100%)]',
      active ? 'bg-[#4b5663] text-white' : 'bg-[#1c1f24] text-[#c9ccd0]',
    )}
  >
    <button className="flex-1 text-center">{label}</button>
    <button aria-label={`Close ${label}`} className="flex h-[7px] w-[7px] shrink-0 border border-[#50565e]">
      <svg viewBox="0 0 5 5" className="h-[5px] w-[5px]"><path d="M1 1l3 3M4 1L1 4" stroke="#70767e" /></svg>
    </button>
  </div>
);

const MixerPanel = () => (
  <section className="shrink-0 rounded-[4px] border-2 border-[#b9c8d2] bg-[#23272e] px-[3px] pt-[3px] pb-px">
    <div className="flex">
      <History />
      <div className="flex min-w-0 flex-1 flex-col border-l border-black bg-[#252930]">
        <div className="flex overflow-hidden">
          {strips.map((s, i) => <ChannelStrip key={i} strip={s} />)}
        </div>
        <div className="flex h-1.5 items-center border-t border-[#14161a] bg-[#14161a]">
          <svg viewBox="0 0 10 5" className="h-[5px] w-[10px] bg-[#3a424c]"><path d="M6 1L4 2.500 6 4" fill="none" stroke="#cfd4da" /></svg>
          <div className="h-1 w-[48%] bg-[#64727f]" />
          <svg viewBox="0 0 10 5" className="ml-auto h-[5px] w-[10px] bg-[#3a424c]"><path d="M4 1l2 1.500L4 4" fill="none" stroke="#cfd4da" /></svg>
        </div>
      </div>
    </div>
    <nav className="flex bg-[#1f2328]">
      {['スコア', 'ピアノロール', 'ミキサー1', 'ピアノロール', 'ミキサー2', 'メディア'].map((t, i) => (
        <Tab key={i} label={t} active={i === 4} />
      ))}
    </nav>
  </section>
);

const sideTracks: [string, string][] = [
  ['1:SYNTH[Melo1]', 'bg-[#3de8ee]'],
  ['2:Syn bass[Bass1]', 'bg-[#409cf6]'],
  ['3:LEAD[Ac1]', 'bg-[#8078f0]'],
  ['4:E Piano[Ac2]', 'bg-[#6480b8]'],
  ['5:Piano[Obli1]', 'bg-[#4c9ca4]'],
  ['6:SAX', 'bg-[#44a068]'],
  ['7:Synth', 'bg-[#84f488]'],
  ['8:DRUM', 'bg-[#18b8f4]'],
  ['9:Bass[Drum1]', 'bg-[#18dc90]'],
];

const SideTracks = () => (
  <div className="w-[86px] shrink-0 overflow-hidden bg-[#1e2127]">
    <div className="flex h-[139px] flex-col font-['Noto_Sans',sans-serif] text-[7px] leading-[10px] whitespace-nowrap text-white">
      {['Beat', 'Tempo', 'Chord', 'Lyric'].map((n) => (
        <div key={n} className="flex min-h-0 flex-1 items-center text-[8px]">
          <span className="mr-px h-full w-[25px] border-b border-l-[6px] border-b-[#7c9098] border-l-[#98b4b8] bg-[#b8e8f6]" />
          {n}
        </div>
      ))}
      {sideTracks.map(([n, color], i) => (
        <div key={n} className={clsx('flex min-h-0 flex-1 items-center', i === 5 && 'bg-[#363b45]')}>
          <span className={clsx('h-full w-1.5 shrink-0', color)} />
          <svg viewBox="0 0 22 8" className="ml-px h-2 w-[22px] shrink-0">
            <circle cx="2.500" cy="4" r="2.500" fill="#d8d8d8" />
            <path d="M6 1h3v6H6zM10 1h3v6h-3z" fill={i === 8 ? '#1f7a28' : '#d8d8d8'} />
            <path d="M14 1l4 3-4 3z" fill="#d8d8d8" />
          </svg>
          {n}
        </div>
      ))}
    </div>
  </div>
);

type Ev = [loc: string, note: string, num: string, st: string, gt: string, vel: string, dev: string];
const events: Ev[] = [
  ['8. 1.160:', 'A 4', '69', '', '119', '108', '-39'],
  ['8. 1.160:', 'G♯4', '68', '160', '105', '88', '80'],
  ['8. 1.320:', 'F 4', '65', '160', '80', '75', '40'],
  ['8. 2.  0:', 'C 4', '60', '320', '196', '107', '0'],
  ['8. 2.320:', 'A 4', '69', '160', '120', '103', '40'],
  ['8. 3.  0:', 'G♯4', '68', '160', '67', '84', '0'],
  ['8. 3.160:', 'F 4', '65', '', '67', '93', '-40'],
  ['8. 3.160:', 'B 3', '59', '320', '240', '113', '80'],
  ['8. 4.  0:', 'C 4', '60', '160', '43', '93', '0'],
  ['8. 4.160:', 'F 4', '65', '160', '33', '80', '80'],
  ['8. 4.320:', 'A 4', '69', '320', '60', '119', '40'],
  ['9. 1.160:', 'E 4', '64', '', '43', '109', '-40'],
  ['9. 1.160:', 'F 4', '65', '', '49', '91', '1'],
  ['9. 1.160:', 'B 3', '59', '160', '67', '80', '80'],
  ['9. 1.320:', 'F 4', '65', '160', '67', '90', '40'],
  ['9. 2.  0:', 'Eb5', '75', '160', '120', '101', '0'],
  ['9. 2.160:', 'A 4', '69', '160', '67', '113', '-40'],
  ['9. 2.320:', 'C♯5', '73', '480', '120', '118', '40'],
  ['9. 3.320:', 'C 5', '72', '160', '67', '101', '40'],
  ['9. 4.  0:', 'B 4', '71', '640', '67', '95', '0'],
  ['10. 1.160:', 'Eb4', '63', '', '67', '104', '-40'],
  ['10. 1.160:', 'A 3', '57', '160', '67', '121', '80'],
  ['10. 1.320:', 'Eb4', '63', '160', '67', '97', '40'],
  ['10. 2.  0:', 'C 5', '72', '160', '105', '113', '0'],
  ['10. 2.160:', 'B 4', '71', '', '67', '96', '-40'],
  ['10. 2.160:', 'Bb4', '70', '160', '67', '102', '80'],
  ['10. 2.320:', 'A 4', '69', '480', '376', '106', '40'],
  ['10. 3.320:', 'G 4', '67', '320', '48', '113', '40'],
  ['10. 4.160:', 'Eb4', '63', '', '67', '105', '-40'],
  ['10. 4.160:', 'A 3', '57', '160', '120', '109', '80'],
  ['10. 4.320:', 'G♯3', '56', '', '33', '80', '38'],
  ['10. 4.320:', 'G 3', '55', '160', '34', '107', '58'],
  ['11. 1.  0:', 'E 3', '52', '', '34', '91', '-74'],
  ['11. 1.  0:', 'C 3', '48', '', '34', '101', '-55'],
  ['11. 1.  0:', 'E 3', '52', '', '46', '115', '0'],
  ['11. 1.  0:', 'F 3', '53', '160', '199', '124', '41'],
  ['11. 1.160:', 'A 3', '57', '160', '67', '106', '80'],
  ['11. 1.320:', 'C 4', '60', '320', '67', '107', '40'],
  ['11. 2.160:', 'Eb4', '63', '160', '67', '96', '-40'],
  ['11. 2.320:', 'G 4', '67', '480', '466', '115', '40'],
];

const NoteMark: React.FC<{ low: boolean }> = ({ low }) => (
  <svg viewBox="0 0 24 9" className="h-[9px] w-6 shrink-0">
    <path d={low ? 'M1.500 2v6M1 2.500h2M5.500 1v2' : 'M2.500 1v6M3 2l2 3M5.500 5v3M1 7.500h2'} fill="none" stroke="#8a2f92" />
    <path d="M10 2.500h13M10 7.500h13" stroke="#7e4c88" />
    <path d={low ? 'M16 5h3v2h-3z' : 'M16 1h3v2h-3z'} fill="#6a2a74" />
  </svg>
);

const NoteName: React.FC<{ note: string }> = ({ note }) =>
  note[1] === '♯' ? (
    <span>{note[0]}<span className="font-['DejaVu_Sans',sans-serif] text-[7px]">♯</span>{note[2]}</span>
  ) : (
    <span>{note}</span>
  );

const bar = (loc: string) => loc.split('.')[0];

const EventTable = () => (
  <table className={clsx('h-full min-w-0 flex-1 table-fixed bg-[#bcc0c0] text-[8px] leading-[9px] whitespace-pre', mono)}>
    <colgroup>
      <col className="w-11" /><col className="w-[38px]" /><col className="w-[22px]" /><col className="w-[23px]" />
      <col className="w-[23px]" /><col className="w-[21px]" /><col />
    </colgroup>
    <thead>
      <tr className="h-[14px] bg-white text-[#16181c]">
        {['Location', 'Note', 'ST', 'GT', 'Vel', 'Dev', 'Information'].map((h) => (
          <th key={h} className="border-r border-[#dcdcdc] text-center font-normal">{h}</th>
        ))}
      </tr>
    </thead>
    <tbody className="text-right text-[#1e1e78]">
      {Array.from({ length: 8 }, (_, i) => (
        <tr key={i} className={clsx('border-b', i === 0 ? 'border-[#a01048]' : i === 7 ? 'border-[#e8ecec]' : 'border-[#2c3a98]')}>
          <td className="pr-[3px] text-[#c83a4c]">{i + 1}. 1.  0:</td>
          <td className="pl-1 text-left text-[#127a1c]">Rest</td>
          <td className="pr-1 text-[#127a1c]"><span className="float-right">{i === 7 ? '160' : '1920'}</span></td>
          <td colSpan={4} />
        </tr>
      ))}
      {events.map(([loc, note, num, st, gt, vel, dev], i) => {
        const last = events[i + 1] && bar(events[i + 1][0]) !== bar(loc);
        return (
          <tr key={i} className={clsx('border-b', last ? 'border-[#2c3a98]' : 'border-[#e8ecec]')}>
            <td className="pr-[3px] text-[#c83a4c]">{loc}</td>
            <td className="pr-1 pl-1">
              <div className="flex h-[9px] justify-between"><NoteName note={note} /><span>{num}</span></div>
            </td>
            <td className="pr-1">{st}</td>
            <td className="pr-1">{gt}</td>
            <td className="pr-0.5">{vel}</td>
            <td className="pr-0.5">{dev}</td>
            <td className="pl-1">
              <div className="flex h-[9px] items-center justify-between font-bold text-[#8c2494]"><span>種類:</span><NoteMark low={+num < 60} /></div>
            </td>
          </tr>
        );
      })}
    </tbody>
  </table>
);

const StepPanel = () => (
  <aside className="flex w-[333px] shrink-0 flex-col rounded-[4px] border-2 border-[#5d6873] bg-[#23272e] px-0.5 pb-px">
    <div className="flex h-5 shrink-0 items-center gap-[7px] border-b border-[#15171b] bg-[#262a31] pt-px pl-[5px]">
      <Group tools={blue('Pointer')} />
      <Group tools={on('Select notes', 'Select keys')} />
      <Group tools={off('Undo', 'v', 'Redo', 'v')} />
      <Group tools={off('Cut', 'Copy', 'Paste', 'Image', 'Erase')} />
      <Group tools={on('Lanes')} />
      <Group tools={on('Print')} />
      <Group tools={off('Home', 'Mirror')} />
    </div>
    <div className="flex h-[18px] shrink-0 items-center gap-[7px] border-b border-[#3a3f46] pl-[5px]">
      <Group tools={on('Note')} />
      <Group tools={[['Step right'], ['Link notes', 'blue']]} />
      <Group tools={[['Triplet', 'off'], ['Boxed note']]} />
      <Group tools={on('C', 'N', 'R')} />
      <Group tools={on('Expand')} />
    </div>
    <div className="flex min-h-0 flex-1">
      <SideTracks />
      <div className="w-0.5 shrink-0 bg-[#3a4048]" />
      <EventTable />
      <div className="flex w-[11px] shrink-0 flex-col items-center bg-[#1c1f24]">
        <Chevron dir="up" />
        <span className="h-[11px] w-full bg-[#5f6e7f]" />
        <div className="flex-1" />
        <Chevron dir="down" />
        {['−', '+'].map((z) => (
          <button key={z} className="mt-px h-[10px] w-[10px] bg-[#4a5561] text-[9px] leading-[10px] font-bold text-[#d4d8dc]">{z}</button>
        ))}
      </div>
    </div>
    <nav className="flex shrink-0">
      <Tab label="ステップ" />
      <Tab label="ステップ" active />
    </nav>
  </aside>
);

const lcd = 'border border-[#15181c] bg-[#1f242b]';

const MiniSlider: React.FC<{ label: string; value: number; className: string }> = ({ label, value, className }) => (
  <input
    type="range"
    aria-label={label}
    defaultValue={value}
    className={clsx('m-0 h-[7px] appearance-none px-1', lcd, className, '[&::-webkit-slider-thumb]:h-[5px] [&::-webkit-slider-thumb]:w-[5px] [&::-webkit-slider-thumb]:appearance-none [&::-webkit-slider-thumb]:bg-[#e4e6e8]')}
  />
);

const modeKeys: { name: string; d: string; lit?: boolean }[] = [
  { name: 'Auto step', d: 'M3 2.500h2M6 2.500h2M9 2.500h2M12 2.500h2M3 4.500h2M6 4.500h3M10 4.500h3M3 7.500h3M7 7.500h2M10 7.500h3M4.500 7v3M8.500 7v3' },
  { name: 'Range', d: 'M3.500 2v8M13.500 2v8M4 6h9M6 4L4 6l2 2M11 4l2 2-2 2', lit: true },
  { name: 'Cycle', d: 'M7 2.500h6v6H6M8 6L5 8.500 8 11M4 5.500h3V2' },
  { name: 'Metronome', d: 'M8.500 2l-3 7.500h6zM8.500 5v4' },
  { name: 'Count', d: 'M3 2.500h3M7 2.500h2M10 2.500h3M3 4.500h3M8 4.500h4M4 7.500h3M9 7.500h3M3.500 3v6M9.500 3v6' },
  { name: 'Window', d: 'M7.500 2.500h6v6M4.500 4.500h6v5h-6zM12.500 3v5M8 3.500h5' },
  { name: 'Keyboard', d: 'M4.500 2.500h8v7h-8zM7.500 2v8M10.500 2v8M6.500 3v5M9.500 3v5', lit: true },
  { name: 'MIDI', d: 'M3 3l4 3-4 3M14 3l-4 3 4 3M5 4h6v4H5M7 3l3 6M10 3L7 9', lit: true },
];

const Transport = () => (
  <div className="flex h-[35px] shrink-0 items-start justify-center gap-[3px] bg-[#434d57] pt-[5px] text-[8px] text-white">
    <div className={clsx('h-[26px] w-20 rounded-[2px] px-1 text-right', lcd)}>
      <div className="flex items-start justify-between">
        <svg viewBox="0 0 6 10" className="mt-0.5 h-[10px] w-1.5"><path d="M0 0h4v10H0zM4 2h2v2H4zM4 6h2v2H4z" fill="#6d829c" /></svg>
        <span className="text-[12px] leading-[14px] whitespace-pre italic">1.   1.    0</span>
      </div>
      <div className="pr-1.5 text-[9px] leading-[9px] font-bold">00:00:00:00</div>
    </div>
    <div className="flex w-[97px] flex-col gap-[3px]">
      <div className="flex">
        <button aria-label="To start" className="h-[15px] w-[25px] bg-linear-to-b from-[#b8b8b8] to-[#8c8c8c]">
          <svg viewBox="0 0 25 15" className="h-[15px] w-[25px]"><path d="M7 4h1v3.500L13 4v3l5-3v7l-5-3v3L8 7.500V11H7z" fill="#18191c" /></svg>
        </button>
        <button aria-label="Record" className="flex h-[15px] w-[25px] items-center justify-center bg-[#70525a]">
          <span className="h-1.5 w-1.5 rounded-full bg-[#1c1216]" />
        </button>
        <button aria-label="Play" className="h-[15px] w-[25px] bg-linear-to-b from-[#c8c8c8] to-[#989898]">
          <svg viewBox="0 0 25 15" className="h-[15px] w-[25px]"><path d="M10 4l6 3.500-6 3.500z" fill="#18191c" /></svg>
        </button>
        <button aria-label="List" className="ml-auto h-[15px] w-[17px] rounded-[2px] bg-[#62676c]">
          <svg viewBox="0 0 17 15" className="h-[15px] w-[17px]"><path d="M5 4.500h7M5 7.500h7M5 10.500h7" stroke="#33373c" /></svg>
        </button>
      </div>
      <MiniSlider label="Position" value={4} className="w-full" />
    </div>
    <div className="flex w-[43px] flex-col gap-[3px]">
      <select aria-label="Tempo" className={clsx('h-[15px] w-full appearance-none pl-px text-[9px] leading-[13px]', mono, lcd)}>
        <option>100.00 ▾</option>
      </select>
      <MiniSlider label="Tempo rate" value={10} className="w-full" />
    </div>
    <div className={clsx('flex h-[26px] w-[15px] flex-col items-center justify-between rounded-[2px] py-0.5 leading-[8px]', lcd)}>
      <svg viewBox="0 0 5 4" className="w-[5px]"><path d="M0 4h5L2.500 1z" fill="#777c82" /></svg>
      0
      <svg viewBox="0 0 5 4" className="w-[5px]"><path d="M0 0h5L2.500 3z" fill="#777c82" /></svg>
    </div>
    <div className={clsx('flex h-[26px] w-12 flex-col justify-around rounded-[2px] px-1 text-[7px] leading-[9px]', lcd)}>
      {['Pre-roll', 'Post-roll'].map((l) => (
        <div key={l} className="flex justify-between text-[#676c73]">{l}<span className="text-[8px] text-white">0</span></div>
      ))}
    </div>
    <div className={clsx('flex h-[26px] w-[97px] flex-col justify-around rounded-[2px] px-0.5 text-[7px] leading-[9px] text-[#676c73]', lcd)}>
      {['Punch In', 'Punch Out'].map((l, i) => (
        <div key={l} className="flex items-center">
          <span className="w-[15px]">{i === 0 && 'Key'}</span>
          <span className="flex-1">{l}</span>
          <span className="mr-1.5 text-[8px] whitespace-pre text-white">1. 1.  0</span>
          <svg viewBox="0 0 5 4" className="mr-1 w-[5px]"><path d="M0 0h5L2.500 3z" fill="#4a5058" /></svg>
        </div>
      ))}
    </div>
    <div className="flex w-[141px] flex-col gap-[3px] pt-px">
      <div className="flex justify-between">
        {modeKeys.map((k) => (
          <button key={k.name} aria-label={k.name} className={clsx('h-3 w-[17px]', k.lit ? 'bg-linear-to-b from-[#ead890] to-[#c8ac4c]' : 'bg-linear-to-b from-[#b8b8b8] to-[#8e8e8e]')}>
            <svg viewBox="0 0 17 12" className="h-3 w-[17px]">
              <path d={k.d} fill="none" stroke="#1c1d20" />
              {k.name === 'MIDI' && <path d="M13 1h1v4h-1zM15 1h1v4h-1zM14 2.500h1v1h-1z" fill="#e03028" />}
            </svg>
          </button>
        ))}
      </div>
      <div className={clsx('h-[10px] pl-1 text-[8px] leading-[8px]', lcd)}>
        <span className="mr-[3px] text-[#8a929c]">≡</span>
        <span className={mono}>Parallel World</span>
      </div>
    </div>
    <div className="ml-1 flex flex-col gap-1.5">
      <button aria-label="Close transport" className="h-[9px] w-[9px] rounded-[2px] border border-[#1c2026] bg-[#353c45]">
        <svg viewBox="0 0 7 7" className="h-[7px] w-[7px]"><path d="M1 1l5 5M6 1L1 6" stroke="#15181c" /></svg>
      </button>
      <button aria-label="Resize transport" className="h-[9px] w-[9px] bg-[#23272e]">
        <svg viewBox="3 3 9 9" className="h-[9px] w-[9px]"><path d={glyphs.Expand.f} fill="#d8dade" /></svg>
      </button>
    </div>
  </div>
);

const StatusBar = () => (
  <footer className="flex h-[10px] shrink-0 justify-end border-t border-[#1a1d22] bg-[#23272e] text-[8px] leading-[9px] text-[#d8dadd]">
    <span className="flex-1 pl-[5px]">レディ</span>
    <span className="w-[43px] border-l border-[#4a5058]" />
    <span className="w-[84px] border-l border-[#4a5058] pl-[3px]">SAX</span>
    <span className="w-[79px] border-l border-[#4a5058] pl-[7px] whitespace-pre">1. 1.  0</span>
    <span className="w-[78px] border-l border-[#4a5058]" />
    <span className="w-[79px] border-l border-[#4a5058]" />
  </footer>
);

export default function App() {
  return (
    <div className="flex h-screen flex-col bg-black font-['Liberation_Sans','Noto_Sans_CJK_JP',sans-serif] leading-none">
      <TopBar />
      <main className="flex min-h-0 flex-1 gap-1">
        <div className="flex min-w-0 flex-1 flex-col gap-0.5">
          <section className="flex min-h-0 flex-1 flex-col rounded-[4px] border-2 border-[#5d6873] bg-[#2b3138] px-[3px] pb-0.5">
            <EditBar />
            <Overview />
            <div className="flex min-h-0 flex-1">
              <TrackList />
              <div className="w-[3px] shrink-0 bg-black" />
              <Arrange />
              <ArrangeScroll />
            </div>
          </section>
          <MixerPanel />
        </div>
        <StepPanel />
      </main>
      <Transport />
      <StatusBar />
    </div>
  );
}
